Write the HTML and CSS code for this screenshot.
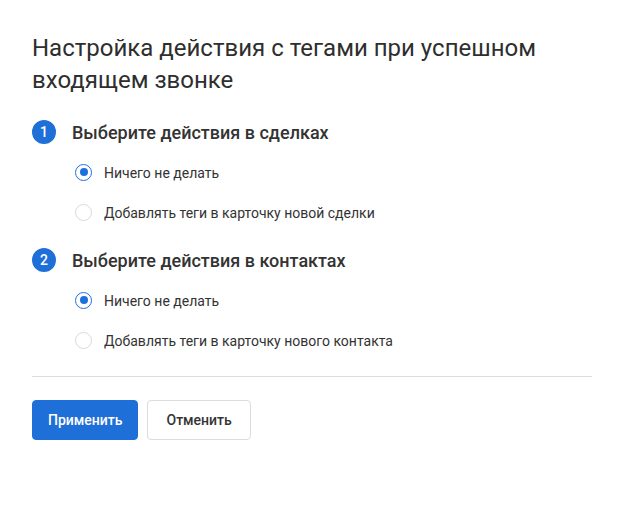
FILE: index.html
```html
<!DOCTYPE html>
<html lang="ru">
<head>
<meta charset="utf-8">
<title>Настройка действия с тегами</title>
<link rel="stylesheet" href="styles.css">
</head>
<body>
<div class="page">
  <h1 class="title">Настройка действия с тегами при успешном входящем звонке</h1>

  <section class="step">
    <div class="step-head">
      <span class="step-num">1</span>
      <span class="step-label">Выберите действия в сделках</span>
    </div>
    <div class="options">
      <label class="option"><span class="radio checked"></span><span class="option-label">Ничего не делать</span></label>
      <label class="option"><span class="radio"></span><span class="option-label">Добавлять теги в карточку новой сделки</span></label>
    </div>
  </section>

  <section class="step">
    <div class="step-head">
      <span class="step-num">2</span>
      <span class="step-label">Выберите действия в контактах</span>
    </div>
    <div class="options">
      <label class="option"><span class="radio checked"></span><span class="option-label">Ничего не делать</span></label>
      <label class="option"><span class="radio"></span><span class="option-label">Добавлять теги в карточку нового контакта</span></label>
    </div>
  </section>

  <hr class="divider">

  <div class="actions">
    <button class="btn btn-primary">Применить</button>
    <button class="btn btn-secondary">Отменить</button>
  </div>
</div>
</body>
</html>
```

FILE: styles.css
```css
* { box-sizing: border-box; }
html, body { margin: 0; padding: 0; background: #fff; }
body {
  font-family: Roboto, "Liberation Sans", Arial, sans-serif;
  color: #333;
}
.page {
  padding: 32px 32px 0 32px;
  width: 624px;
}
.title {
  margin: 0;
  font-size: 24px;
  line-height: 32px;
  font-weight: 400;
  color: #2e2e2e;
  width: 540px;
}
.step { margin-top: 24px; }
.step + .step { margin-top: 16px; }
.step-head {
  display: flex;
  align-items: center;
  gap: 16px;
  height: 24px;
}
.step-num {
  width: 24px;
  height: 24px;
  border-radius: 50%;
  background: #1f6fd8;
  color: #fff;
  font-size: 14px;
  font-weight: 500;
  display: flex;
  align-items: center;
  justify-content: center;
}
.step-label {
  font-size: 18px;
  font-weight: 500;
  color: #333;
}
.options {
  padding-top: 8px;
  padding-left: 43px;
}
.option {
  display: flex;
  align-items: center;
  height: 40px;
  font-size: 14px;
  color: #333;
}
.option-label { padding-top: 1px; }
.radio {
  width: 17px;
  height: 17px;
  border-radius: 50%;
  border: 1px solid #d9d9d9;
  margin-right: 12px;
  display: flex;
  align-items: center;
  justify-content: center;
}
.radio.checked { border-color: #1f6fd8; }
.radio.checked::after {
  content: "";
  width: 8px;
  height: 8px;
  border-radius: 50%;
  background: #1f6fd8;
}
.divider {
  margin: 16px 0 0 0;
  border: 0;
  border-top: 1px solid #dcdcdc;
  height: 0;
}
.actions {
  display: flex;
  gap: 9px;
  margin-top: 23px;
}
.btn {
  height: 40px;
  border-radius: 4px;
  font-family: Roboto, "Liberation Sans", Arial, sans-serif;
  font-size: 14px;
  font-weight: 500;
  padding: 0 15px;
}
.btn-primary {
  background: #1f6fd8;
  border: 1px solid #1f6fd8;
  color: #fff;
}
.btn-secondary {
  background: #fff;
  border: 1px solid #dcdcdc;
  color: #333;
  padding: 0 18px;
}
```
